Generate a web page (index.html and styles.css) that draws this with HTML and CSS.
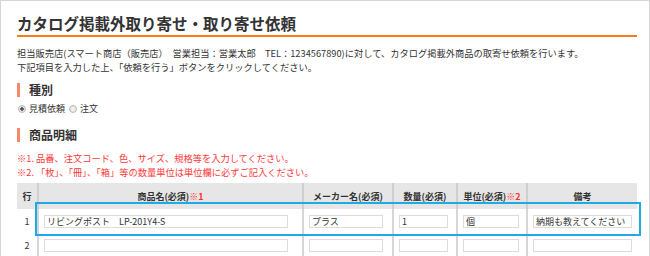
FILE: index.html
```html
<!DOCTYPE html>
<html lang="ja">
<head>
    <meta charset="UTF-8">
    <meta name="viewport" content="width=device-width, initial-scale=1.0">
    <title>カタログ掲載外取り寄せ・取り寄せ依頼</title>
    <link rel="stylesheet" href="styles.css">
</head>
<body>
<div class="frame">
    <h1 class="page-title">カタログ掲載外取り寄せ・取り寄せ依頼</h1>
    <p class="lead">
        担当販売店(スマート商店（販売店）　営業担当：営業太郎　TEL：1234567890)に対して、カタログ掲載外商品の取寄せ依頼を行います。<br>
        下記項目を入力した上、「依頼を行う」ボタンをクリックしてください。
    </p>

    <h2 class="sec">種別</h2>
    <div class="kind">
        <label><input type="radio" name="kind" value="estimate" checked>見積依頼</label>
        <label><input type="radio" name="kind" value="order">注文</label>
    </div>

    <h2 class="sec sec-items">商品明細</h2>
    <p class="note">
        ※1. 品番、注文コード、色、サイズ、規格等を入力してください。<br>
        ※2. 「枚」、「冊」、「箱」等の数量単位は単位欄に必ずご記入ください。
    </p>

    <div class="table-wrap">
        <table class="items">
            <colgroup>
                <col class="c-no">
                <col class="c-name">
                <col class="c-maker">
                <col class="c-qty">
                <col class="c-unit">
                <col class="c-memo">
            </colgroup>
            <thead>
                <tr>
                    <th>行</th>
                    <th>商品名(必須)<span class="req">※1</span></th>
                    <th>メーカー名(必須)</th>
                    <th>数量(必須)</th>
                    <th>単位(必須)<span class="req">※2</span></th>
                    <th>備考</th>
                </tr>
            </thead>
            <tbody>
                <tr>
                    <td class="no">1</td>
                    <td><input class="in-name" type="text" value="リビングポスト　LP-201Y4-S"></td>
                    <td><input class="in-maker" type="text" value="プラス"></td>
                    <td><input class="in-qty" type="text" value="1"></td>
                    <td><input class="in-unit" type="text" value="個"></td>
                    <td><input class="in-memo" type="text" value="納期も教えてください"></td>
                </tr>
                <tr>
                    <td class="no">2</td>
                    <td><input class="in-name" type="text"></td>
                    <td><input class="in-maker" type="text"></td>
                    <td><input class="in-qty" type="text"></td>
                    <td><input class="in-unit" type="text"></td>
                    <td><input class="in-memo" type="text"></td>
                </tr>
            </tbody>
        </table>
        <div class="highlight"></div>
    </div>
</div>
</body>
</html>
```

FILE: styles.css
```css
html, body {
    margin: 0;
    height: 256px;
    overflow: hidden;
    background: #fff;
}
body {
    font-family: "Noto Sans CJK JP", "Liberation Sans", sans-serif;
    color: #333;
}
.frame {
    width: 650px;
    height: 256px;
    overflow: hidden;
    box-sizing: border-box;
    border: 1px solid #d6d6d6;
    border-bottom: none;
    padding: 12px 12px 0 16px;
}
.page-title {
    margin: 0;
    font-size: 15.5px;
    line-height: 21px;
    font-weight: bold;
    padding-bottom: 1px;
    border-bottom: 2px solid #fb7a1a;
}
.lead {
    margin: 9px 0 0;
    font-size: 9.25px;
    line-height: 14px;
}
.sec {
    margin: 9px 0 0;
    font-size: 12px;
    line-height: 14px;
    font-weight: bold;
    border-left: 3px solid #f5876b;
    padding-left: 9px;
}
.sec-items {
    margin-top: 12px;
}
.kind {
    margin-top: 5px;
    font-size: 9px;
    line-height: 14px;
    display: flex;
    gap: 3px;
}
.kind label {
    display: flex;
    align-items: center;
}
.kind input {
    appearance: none;
    -webkit-appearance: none;
    width: 8px;
    height: 8px;
    margin: 0 3px 0 1px;
    border-radius: 50%;
    border: 1px solid #b9b9b9;
    background: radial-gradient(circle, #f4f4f4 0, #dedede 100%);
    box-sizing: border-box;
}
.kind input:checked {
    background: radial-gradient(circle, #555 0, #555 1.5px, #e8e8e8 2px);
}
.note {
    margin: 9px 0 0;
    font-size: 9.25px;
    line-height: 14px;
    color: #ff3737;
}
.table-wrap {
    position: relative;
    margin-top: 4px;
}
.items {
    width: 620px;
    border-collapse: collapse;
    table-layout: fixed;
    font-size: 9px;
}
.c-no { width: 21px; }
.c-name { width: 265px; }
.c-maker { width: 90px; }
.c-qty { width: 64px; }
.c-unit { width: 70px; }
.c-memo { width: 110px; }
.items th {
    height: 26px;
    padding: 0;
    background: #e6e6e6;
    font-weight: bold;
    text-align: center;
    border-left: 2px solid #cfcfcf;
}
.items td {
    height: 24px;
    padding: 0 0 0 5px;
    border-left: 2px solid #d6d6d6;
    vertical-align: middle;
}
.items th:first-child,
.items td:first-child {
    border-left: none;
}
.items td.no {
    padding: 0;
    text-align: center;
}
.req {
    color: #ff2d2d;
}
.items input {
    display: block;
    height: 13px;
    box-sizing: border-box;
    border: 1px solid #dcdcdc;
    padding: 0 2px;
    font-family: inherit;
    font-size: 9px;
    color: #333;
    outline: none;
}
.in-name { width: 244px; }
.in-maker { width: 74px; }
.in-qty { width: 49px; }
.in-unit { width: 56px; }
.in-memo { width: 99px; }
.highlight {
    position: absolute;
    left: 18px;
    top: 19px;
    width: 606px;
    height: 34px;
    box-sizing: border-box;
    border: 2px solid #1eaae6;
}
```
